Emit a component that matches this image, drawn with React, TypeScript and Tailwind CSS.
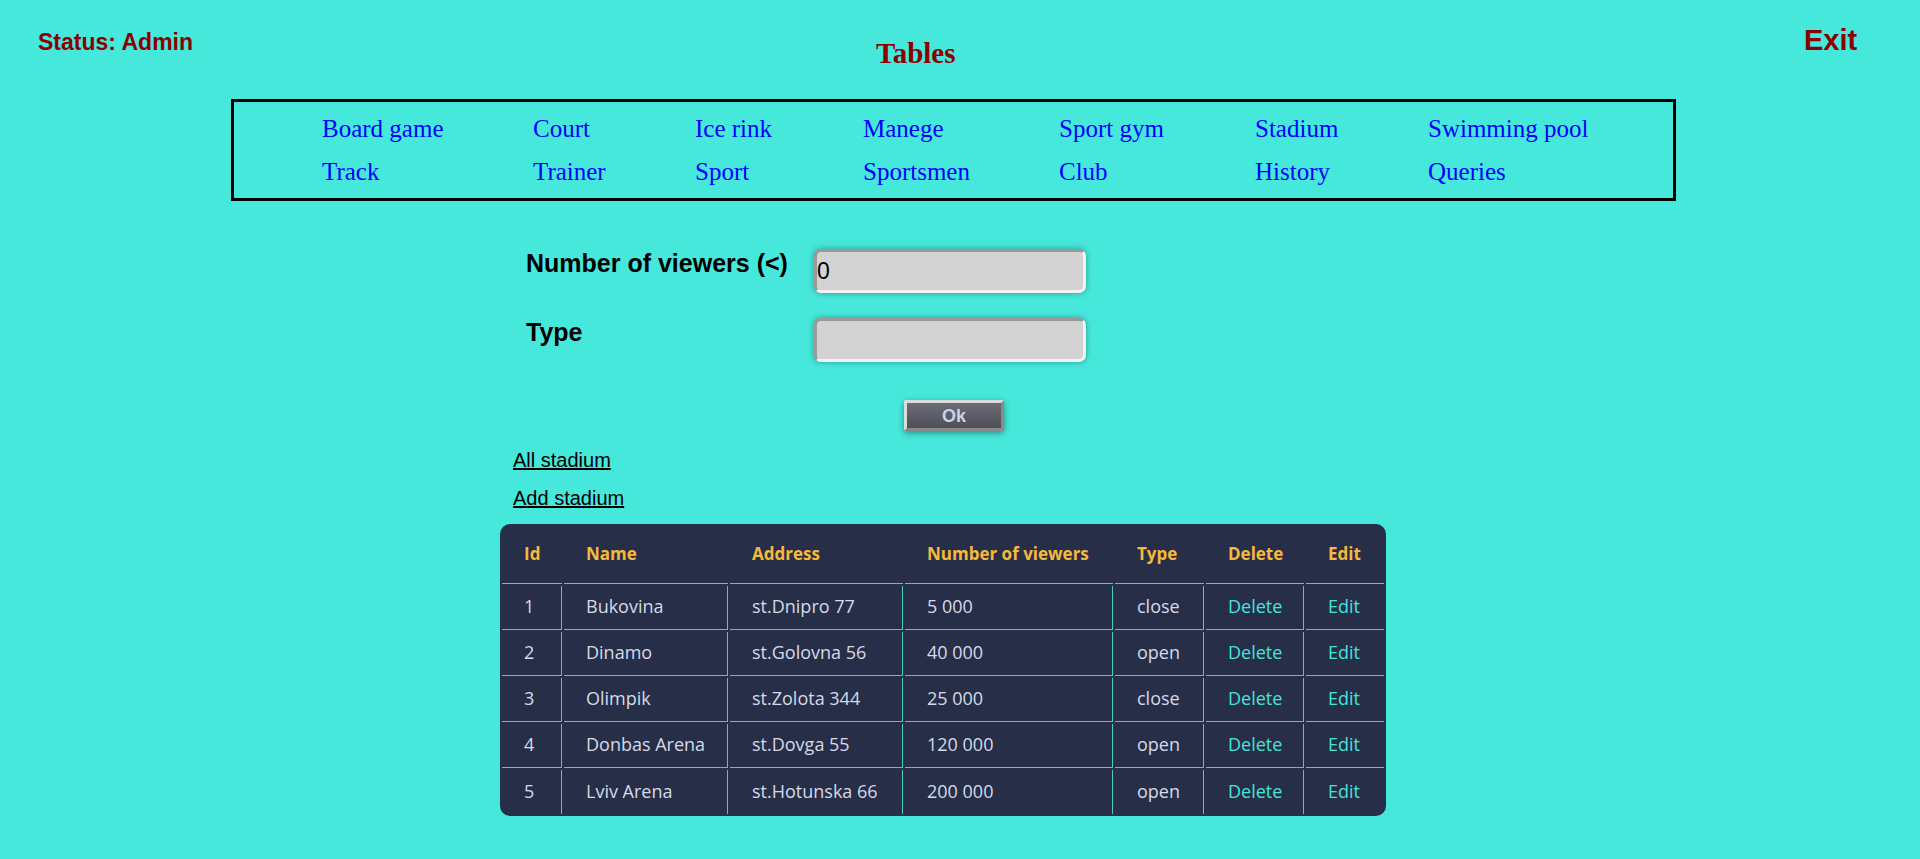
import React from "react";

const navRows = [
  ["Board game", "Court", "Ice rink", "Manege", "Sport gym", "Stadium", "Swimming pool"],
  ["Track", "Trainer", "Sport", "Sportsmen", "Club", "History", "Queries"],
];

const stadiums = [
  { id: 1, name: "Bukovina", address: "st.Dnipro 77", viewers: "5 000", type: "close" },
  { id: 2, name: "Dinamo", address: "st.Golovna 56", viewers: "40 000", type: "open" },
  { id: 3, name: "Olimpik", address: "st.Zolota 344", viewers: "25 000", type: "close" },
  { id: 4, name: "Donbas Arena", address: "st.Dovga 55", viewers: "120 000", type: "open" },
  { id: 5, name: "Lviv Arena", address: "st.Hotunska 66", viewers: "200 000", type: "open" },
];

const headers = ["Id", "Name", "Address", "Number of viewers", "Type", "Delete", "Edit"];
const colWidths = ["w-[60px]", "w-[164px]", "w-[173px]", "w-[208px]", "w-[89px]", "w-[98px]", "w-[78px]"];

const inputClass =
  "block w-[272px] h-[44px] bg-[#d3d3d3] rounded-[7px] border-[3px] border-t-[#9a9a9a] border-l-[#9a9a9a] border-b-[#f2f2f2] border-r-[#f2f2f2] shadow-[0_0_6px_rgba(0,0,0,0.35)] px-0 text-[23px] text-black outline-none font-['Liberation_Sans',Arial,sans-serif]";

export default function App() {
  return (
    <div className="min-h-[859px] w-full bg-[#46e8dc] font-['Liberation_Sans',Arial,sans-serif]">
      {/* Header */}
      <div className="flex h-[99px] items-start">
        <div className="w-[876px] pl-[38px] pt-[29px] text-[23px] leading-[26px] font-bold text-[#8b0000]">
          Status: Admin
        </div>
        <div className="w-[928px] pt-[37px] text-[29px] leading-[33px] font-bold text-[#8b0000] font-['Liberation_Serif','Times_New_Roman',serif]">
          Tables
        </div>
        <div className="pt-[24px] text-[29px] leading-[33px] font-bold text-[#8b0000]">Exit</div>
      </div>

      {/* Navigation */}
      <div className="ml-[231px] w-[1445px] border-[3px] border-black pt-[5px] pb-[5px] pl-[88px]">
        {navRows.map((row, i) => (
          <div
            key={i}
            className="grid grid-cols-[211px_162px_168px_196px_196px_173px_auto] h-[43px] leading-[43px] text-[25px] font-['Liberation_Serif','Times_New_Roman',serif]"
          >
            {row.map((item) => (
              <a key={item} href="#" className="text-[#0000ff] whitespace-nowrap">
                {item}
              </a>
            ))}
          </div>
        ))}
      </div>

      {/* Filter form */}
      <div className="ml-[526px] mt-[48px] flex flex-col gap-[25px]">
        <div className="flex items-start">
          <div className="w-[288px] text-[25px] leading-[28px] font-bold text-black">Number of viewers (&lt;)</div>
          <input className={inputClass} defaultValue="0" />
        </div>
        <div className="flex items-start">
          <div className="w-[288px] text-[25px] leading-[28px] font-bold text-black">Type</div>
          <input className={inputClass} defaultValue="" />
        </div>
      </div>

      <button className="ml-[904px] mt-[38px] block w-[100px] h-[31px] rounded-[2px] border-[3px] border-t-[#dcdcdc] border-l-[#dcdcdc] border-b-[#8a8a8a] border-r-[#8a8a8a] bg-gradient-to-b from-[#6c6c74] to-[#4f4f57] text-[18px] font-bold leading-none text-[#c9d4e8] shadow-[0_2px_6px_rgba(0,0,0,0.4)]">
        Ok
      </button>

      <div className="ml-[513px] mt-[18px] flex flex-col gap-[15px] text-[20px] leading-[23px] text-black">
        <a href="#" className="underline w-fit">All stadium</a>
        <a href="#" className="underline w-fit">Add stadium</a>
      </div>

      {/* Table */}
      <div className="ml-[500px] mt-[14px] w-[886px] rounded-[10px] bg-[#262e48] overflow-hidden">
        <table className="w-[886px] table-fixed border-separate border-spacing-[2px] font-['Open_Sans','Noto_Sans',sans-serif]">
          <thead>
            <tr>
              {headers.map((h, i) => (
                <th
                  key={h}
                  className={`${colWidths[i]} h-[58px] p-0 pl-[22px] pb-[2px] text-left align-middle text-[17px] font-bold text-[#f6b93b] border-b border-[#45cfc4] whitespace-nowrap`}
                >
                  {h}
                </th>
              ))}
            </tr>
          </thead>
          <tbody>
            {stadiums.map((s, r) => {
              const last = r === stadiums.length - 1;
              const cell = `h-[44px] p-0 pl-[22px] pb-[2px] text-left align-middle text-[18px] whitespace-nowrap border-[#45cfc4] ${
                last ? "" : "border-b"
              }`;
              return (
                <tr key={s.id}>
                  <td className={`${cell} border-r text-[#d6dae6]`}>{s.id}</td>
                  <td className={`${cell} border-r text-[#d6dae6]`}>{s.name}</td>
                  <td className={`${cell} border-r text-[#d6dae6]`}>{s.address}</td>
                  <td className={`${cell} border-r text-[#d6dae6]`}>{s.viewers}</td>
                  <td className={`${cell} border-r text-[#d6dae6]`}>{s.type}</td>
                  <td className={`${cell} border-r`}>
                    <a href="#" className="text-[#45e4d8]">Delete</a>
                  </td>
                  <td className={cell}>
                    <a href="#" className="text-[#45e4d8]">Edit</a>
                  </td>
                </tr>
              );
            })}
          </tbody>
        </table>
      </div>
    </div>
  );
}
